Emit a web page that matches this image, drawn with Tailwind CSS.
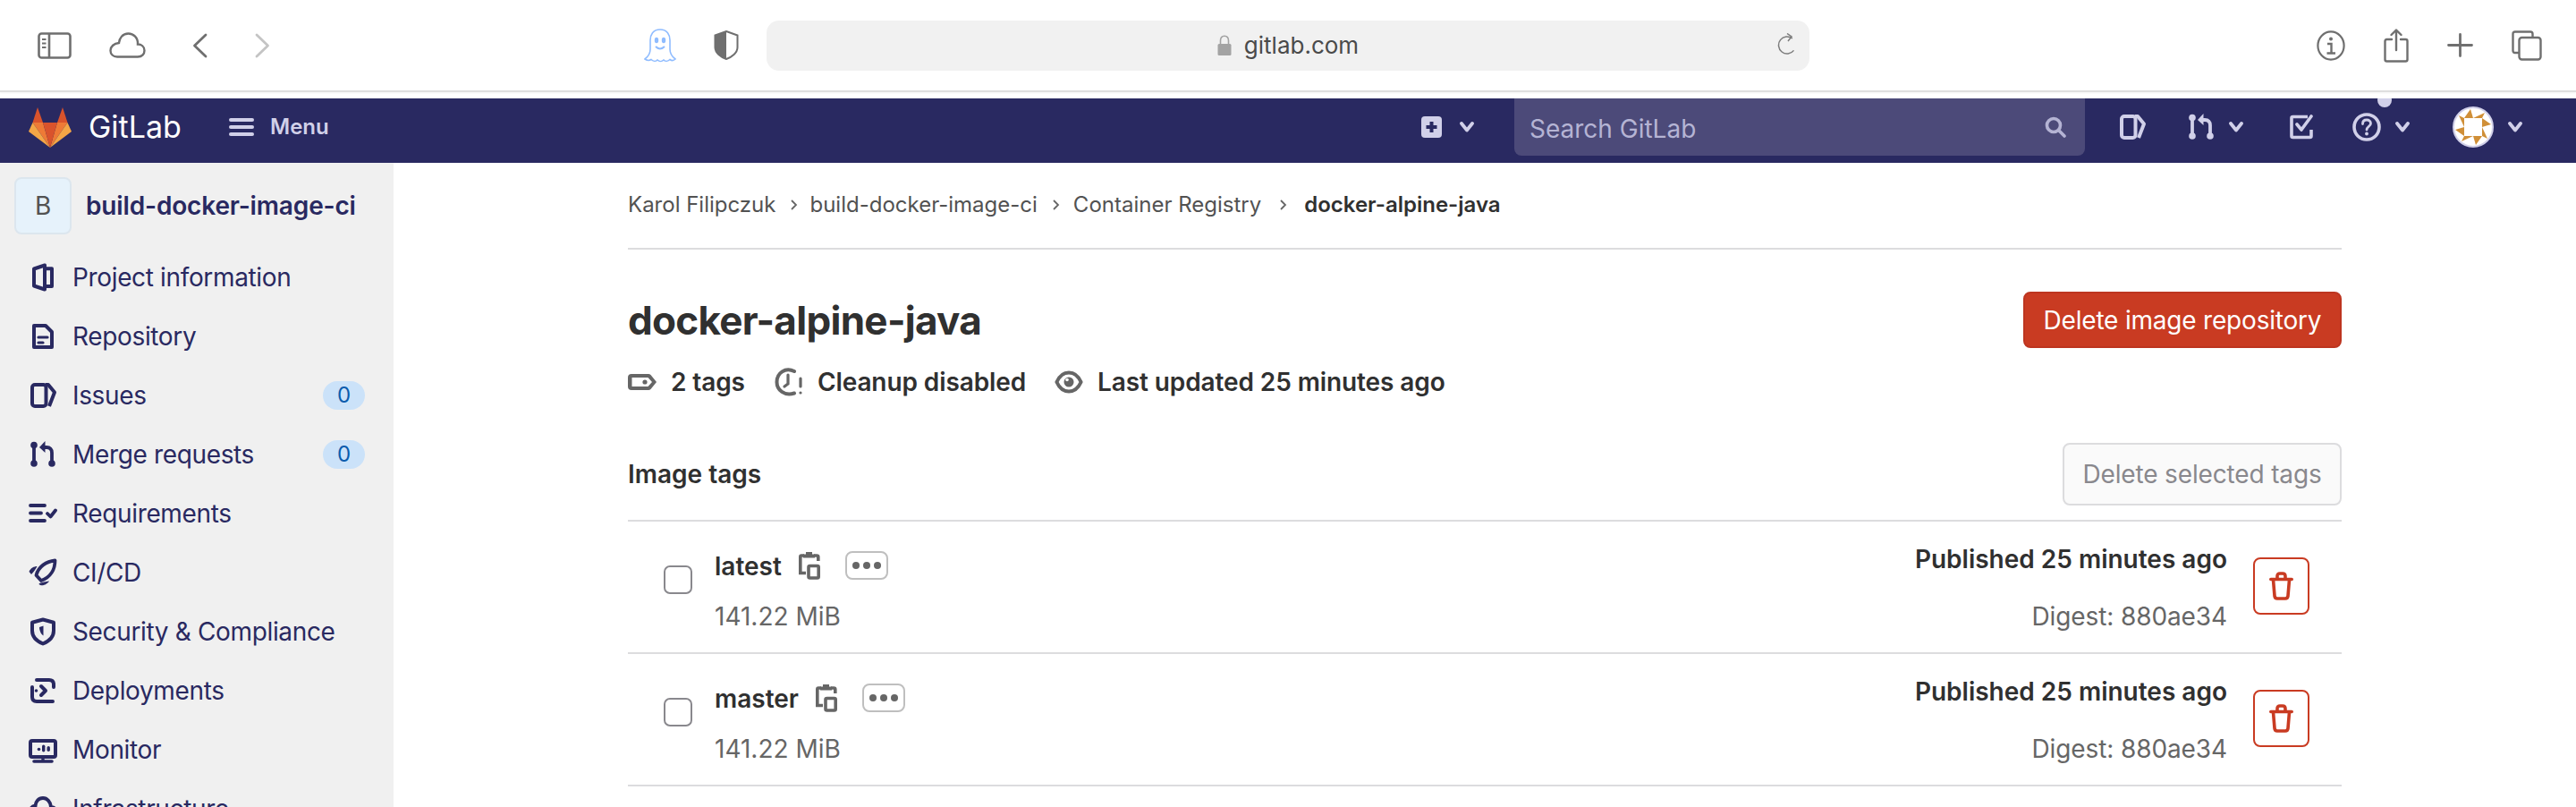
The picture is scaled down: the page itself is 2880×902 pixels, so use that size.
<!DOCTYPE html>
<html lang="en">
  <head>
    <meta charset="UTF-8" />
    <title>docker-alpine-java · GitLab</title>
    <script src="https://cdn.jsdelivr.net/npm/@tailwindcss/browser@4"></script>
  </head>
  <body class="w-[2880px] h-[902px] overflow-hidden bg-white font-['Inter',sans-serif] text-[28px] text-[#303030]">
    <svg class="hidden">
      <symbol id="chev" viewBox="0 0 16 12"><path d="M2 2 L8 9.5 L14 2" fill="none" stroke="currentColor" stroke-width="3.8" stroke-linecap="round" stroke-linejoin="round" /></symbol>
      <symbol id="issues" viewBox="0 0 32 32"><g fill="none" stroke="currentColor" stroke-width="4" stroke-linejoin="round"><rect x="4" y="4" width="15.5" height="24" rx="3" /><path d="M19 4 H22 L29 12.5 L23 28" /></g></symbol>
      <symbol id="mr" viewBox="0 0 32 32"><g fill="none" stroke="currentColor" stroke-width="3.8"><path d="M6 6 V26" /><path d="M26 26 V14 Q26 8 20 8 H16" /></g><g fill="currentColor"><circle cx="6" cy="5.5" r="3.8" /><circle cx="6" cy="26" r="3.8" /><circle cx="26" cy="26" r="3.8" /><path d="M18.5 1 L12 8 L18.5 14Z" /></g></symbol>
      <symbol id="clip" viewBox="0 0 24 32"><g fill="none" stroke="currentColor" stroke-width="3.6"><path d="M6 5 H3 Q1.8 5 1.8 6.5 V24.5 H8" /><path d="M17 5 H20 Q21.8 5 21.8 6.5 V11" /><path d="M6 6.5 V4.5 H9 V2 H14 V4.5 H17 V6.5Z" fill="currentColor" stroke-width="2" /><rect x="11" y="16.5" width="11.2" height="13.5" rx="1.5" /></g></symbol>
      <symbol id="trash" viewBox="0 0 27 32"><g fill="none" stroke="currentColor" stroke-width="3.6" stroke-linecap="round" stroke-linejoin="round"><path d="M1.8 8.5 H25.2" /><path d="M9 8 V5 Q9 2 12 2 H15 Q18 2 18 5 V8" /><path d="M4.5 9 L6 27 Q6.3 30 9 30 H18 Q20.7 30 21 27 L22.5 9" /></g></symbol>
    </svg>

    <!-- Browser toolbar -->
    <div class="flex items-center h-[103px] border-b-2 border-[#dedede] pl-[42px] text-[#6f6f6f] shadow-[0_1px_2px_#0000000d]">
      <svg class="w-[38px] h-[30px] shrink-0" viewBox="0 0 38 30" fill="none" stroke="currentColor" stroke-width="2.6"><rect x="1.5" y="1.5" width="35" height="27" rx="3" /><path d="M13 1.5 V28.5" /><path d="M5 8 H9.5 M5 12.5 H9.5 M5 17 H9.5" stroke-width="2" /></svg>
      <svg class="ml-[42px] w-[41px] h-[29px] shrink-0" viewBox="0 0 41 29" fill="none" stroke="currentColor" stroke-width="2.4"><path d="M9 27.5 H32 C37 27.5 39.5 24 39.5 20.5 C39.5 16 36 13.5 32 13.5 C32.5 6 27 1.5 21.5 1.5 C15 1.5 11.5 6.5 11 12 C5.5 12.5 1.5 16 1.5 20.5 C1.5 24.5 4.5 27.5 9 27.5Z" /></svg>
      <svg class="ml-[52px] w-[17px] h-[28px] shrink-0" viewBox="0 0 17 28" fill="none" stroke="currentColor" stroke-width="2.8" stroke-linecap="round" stroke-linejoin="round"><path d="M15 2 L2.5 14 L15 26" /></svg>
      <svg class="ml-[53px] w-[17px] h-[28px] shrink-0 text-[#c4c4c4]" viewBox="0 0 17 28" fill="none" stroke="currentColor" stroke-width="2.8" stroke-linecap="round" stroke-linejoin="round"><path d="M2 2 L14.5 14 L2 26" /></svg>
      <svg class="ml-[418px] w-[36px] h-[38px] shrink-0" viewBox="0 0 36 38" fill="none" stroke="#8fbcff" stroke-width="1.6"><path d="M18 1 C10 1 7 7 7 13 V23 C7 28 5 31 1 34 C4 36 6 36 8 34.5 C10 36.5 13 37 15 35 C17 37 20 37 22 35 C24 37 27 36.5 29 34.5 C31 36 33 36 35 34 C31 31 29 28 29 23 V13 C29 7 26 1 18 1Z" /><ellipse cx="14" cy="13" rx="2.2" ry="3.2" fill="#8fbcff" stroke="none" /><ellipse cx="22" cy="13" rx="2.2" ry="3.2" fill="#8fbcff" stroke="none" /><path d="M13 20 Q18 25 23 20" stroke-width="2" /></svg>
      <svg class="ml-[42px] w-[28px] h-[33px] shrink-0" viewBox="0 0 28 33"><path d="M14 1 L26.5 5.5 V19 C26.5 25 20 30 14 32 C8 30 1.5 25 1.5 19 V5.5Z" fill="#fff" stroke="currentColor" stroke-width="2" /><path d="M14 1 L1.5 5.5 V19 C1.5 25 8 30 14 32Z" fill="currentColor" /></svg>
      <div class="relative ml-[31px] w-[1166px] h-[56px] shrink-0 flex items-center justify-center rounded-[14px] bg-[#f1f1f1]">
        <svg class="w-[16px] h-[23px] mr-[14px]" viewBox="0 0 16 23"><path d="M3.5 11 V6.5 C3.5 3 5.5 1.2 8 1.2 C10.5 1.2 12.5 3 12.5 6.5 V11" fill="none" stroke="#a3a3a3" stroke-width="1.6" /><rect x="0.5" y="10" width="15" height="13" rx="1.5" fill="#a3a3a3" /></svg>
        <span class="text-[26px] text-[#4a4a4a]">gitlab.com</span>
        <svg class="absolute right-[14px] top-[14px] w-[22px] h-[24px]" viewBox="0 0 22 24" fill="none" stroke="#7c7c7c" stroke-width="1.5"><path d="M11 4 A9.5 9.5 0 1 0 20.5 13.5" transform="rotate(38 11 13.5)" /><path d="M11 0.5 L16 4 L12 9" /></svg>
      </div>
      <svg class="ml-[567px] w-[32px] h-[34px] shrink-0" viewBox="0 0 32 34" fill="none" stroke="currentColor" stroke-width="2.2"><ellipse cx="16" cy="17" rx="14.6" ry="15.6" /><path d="M12 15 H16.5 V25 M11.5 25.5 H21" stroke-width="2.4" /><circle cx="16" cy="9.5" r="2" fill="currentColor" stroke="none" /></svg>
      <svg class="ml-[43px] w-[28px] h-[38px] shrink-0" viewBox="0 0 28 38" fill="none" stroke="currentColor" stroke-width="2.4" stroke-linecap="round" stroke-linejoin="round"><path d="M9 12 H3.5 Q1.5 12 1.5 14 V34.5 Q1.5 36.5 3.5 36.5 H24.5 Q26.5 36.5 26.5 34.5 V14 Q26.5 12 24.5 12 H19" /><path d="M14 24 V2 M8.5 7 L14 1.5 L19.5 7" /></svg>
      <svg class="ml-[43px] w-[29px] h-[27px] shrink-0" viewBox="0 0 29 27" fill="none" stroke="currentColor" stroke-width="2.8" stroke-linecap="round"><path d="M14.5 1.5 V25.5 M1.5 13.5 H27.5" /></svg>
      <svg class="ml-[43px] w-[34px] h-[34px] shrink-0" viewBox="0 0 34 34" fill="none" stroke="currentColor" stroke-width="2.4"><path d="M8 25 H4 Q1.5 25 1.5 22.5 V4 Q1.5 1.5 4 1.5 H21 Q23.5 1.5 23.5 4 V8" /><rect x="8.5" y="8" width="24" height="24.5" rx="3" /></svg>
    </div>

    <!-- GitLab navbar -->
    <nav class="mt-[7px] flex items-center h-[72px] pb-2 pl-[32px] overflow-hidden bg-[#292961] text-[#d1d0e9]">
      <svg class="w-[48px] h-[45px] shrink-0" viewBox="0 0 48 45">
        <polygon points="10,0 4.5,17 16,17" fill="#d9532c" />
        <polygon points="38,0 43.5,17 32,17" fill="#d9532c" />
        <polygon points="4.5,17 16,17 24,45" fill="#ee7a36" />
        <polygon points="43.5,17 32,17 24,45" fill="#ee7a36" />
        <polygon points="4.5,17 0,27 24,45" fill="#f4a646" />
        <polygon points="43.5,17 48,27 24,45" fill="#f4a646" />
        <polygon points="16,17 32,17 24,45" fill="#d9532c" />
      </svg>
      <div class="ml-[19px] w-[157px] shrink-0 text-[34px] leading-none text-white">GitLab</div>
      <svg class="w-[28px] h-[20px] shrink-0" viewBox="0 0 28 20" fill="currentColor"><rect width="28" height="4" rx="2" /><rect y="8" width="28" height="4" rx="2" /><rect y="16" width="28" height="4" rx="2" /></svg>
      <span class="ml-[18px] text-[24px] font-semibold">Menu</span>

      <div class="ml-auto pr-[60px] flex items-center h-full shrink-0">
        <svg class="w-[23px] h-[24px] shrink-0" viewBox="0 0 23 24"><rect width="23" height="24" rx="4" fill="currentColor" /><path d="M11.5 6 V18 M5.5 12 H17.5" stroke="#292961" stroke-width="4" /></svg>
        <svg class="ml-[20px] w-[16px] h-[12px] shrink-0"><use href="#chev" /></svg>
        <div class="ml-[45px] w-[638px] h-full shrink-0 flex items-center justify-between pl-[17px] pr-[21px] rounded-b-lg bg-[#4c4a79]">
          <span class="pt-[4px] text-[#b5b4d4]">Search GitLab</span>
          <svg class="w-[24px] h-[24px]" viewBox="0 0 24 24" fill="none" stroke="#b5b4d4" stroke-width="3.6" stroke-linecap="round"><circle cx="10" cy="10" r="7.5" /><path d="M16 16 L22 22" /></svg>
        </div>
        <svg class="ml-[37px] w-[32px] h-[32px] shrink-0"><use href="#issues" /></svg>
        <svg class="ml-[45px] w-[32px] h-[32px] shrink-0"><use href="#mr" /></svg>
        <svg class="ml-[15px] w-[16px] h-[12px] shrink-0"><use href="#chev" /></svg>
        <svg class="ml-[52px] w-[26px] h-[28px] shrink-0" viewBox="0 0 26 28" fill="none" stroke="currentColor" stroke-width="3.6" stroke-linejoin="round"><path d="M20 2.5 H3.5 Q2 2.5 2 4 V24 Q2 25.5 3.5 25.5 H22.5 Q24 25.5 24 24 V17" /><path d="M8 11 L13 17 L24 2" stroke-linecap="round" /></svg>
        <div class="relative ml-[44px] w-[32px] h-[32px] shrink-0">
          <svg class="w-[32px] h-[32px]" viewBox="0 0 32 32" fill="none" stroke="currentColor" stroke-width="3.6"><circle cx="16" cy="16" r="14" /><path d="M11.5 12.5 C11.5 9.5 13.5 8 16 8 C18.5 8 20.5 9.5 20.5 12 C20.5 15 16 15.5 16 19" stroke-width="2.8" stroke-linecap="round" /><circle cx="16" cy="23.5" r="1.9" fill="currentColor" stroke="none" /></svg>
          <span class="absolute top-[-22px] left-[28px] w-[16px] h-[16px] rounded-full bg-[#d1d0e9]"></span>
        </div>
        <svg class="ml-[16px] w-[16px] h-[12px] shrink-0"><use href="#chev" /></svg>
        <svg class="ml-[48px] w-[46px] h-[46px] shrink-0" viewBox="0 0 46 46">
          <circle cx="23" cy="23" r="22" fill="#fff" stroke="#d1d0e9" stroke-width="2" />
          <g fill="#d08f37">
            <g><polygon points="13,13 23,13 20,3" /><polygon points="23,13 33,13 36,7" /></g>
            <g transform="rotate(90 23 23)"><polygon points="13,13 23,13 20,3" /><polygon points="23,13 33,13 36,7" /></g>
            <g transform="rotate(180 23 23)"><polygon points="13,13 23,13 20,3" /><polygon points="23,13 33,13 36,7" /></g>
            <g transform="rotate(270 23 23)"><polygon points="13,13 23,13 20,3" /><polygon points="23,13 33,13 36,7" /></g>
          </g>
        </svg>
        <svg class="ml-[16px] w-[16px] h-[12px] shrink-0"><use href="#chev" /></svg>
      </div>
    </nav>

    <div class="flex h-[720px] overflow-hidden">
      <!-- Sidebar -->
      <aside class="w-[440px] shrink-0 bg-[#f0f0f0] pt-4 text-[#292961] tracking-[-0.35px]">
        <div class="flex items-center pl-4 mb-[15px]">
          <div class="w-[64px] h-[64px] rounded-lg border-2 border-[#dce6ee] bg-[#e6f2fb] flex items-center justify-center text-[#525252]">B</div>
          <span class="ml-[16px] font-semibold tracking-[-0.15px]">build-docker-image-ci</span>
        </div>
        <a class="flex items-center h-[66px] pl-[32px]">
          <svg class="w-[32px] h-[32px] shrink-0" viewBox="0 0 32 32" fill="none" stroke="currentColor" stroke-width="4" stroke-linejoin="round"><path d="M6 6.5 L18 2.5 V29.5 L6 25.5Z" /><path d="M18 6.2 H26 V26 H18" /></svg>
          <span class="ml-[17px]">Project information</span>
        </a>
        <a class="flex items-center h-[66px] pl-[32px]">
          <svg class="w-[32px] h-[32px] shrink-0" viewBox="0 0 32 32" fill="none" stroke="currentColor" stroke-width="4" stroke-linejoin="round"><path d="M6 4 H19 L26 11 V28 H6Z" /><path d="M11 17 H21 M11 23 H16" stroke-width="3.2" stroke-linecap="round" /></svg>
          <span class="ml-[17px]">Repository</span>
        </a>
        <a class="flex items-center h-[66px] pl-[32px] pr-[32px]">
          <svg class="w-[32px] h-[32px] shrink-0"><use href="#issues" /></svg>
          <span class="ml-[17px]">Issues</span>
          <span class="ml-auto w-[47px] h-[32px] rounded-full bg-[#cbe2f9] flex items-center justify-center text-[24px] text-[#0b5cad]">0</span>
        </a>
        <a class="flex items-center h-[66px] pl-[32px] pr-[32px]">
          <svg class="w-[32px] h-[32px] shrink-0"><use href="#mr" /></svg>
          <span class="ml-[17px]">Merge requests</span>
          <span class="ml-auto w-[47px] h-[32px] rounded-full bg-[#cbe2f9] flex items-center justify-center text-[24px] text-[#0b5cad]">0</span>
        </a>
        <a class="flex items-center h-[66px] pl-[32px]">
          <svg class="w-[32px] h-[32px] shrink-0" viewBox="0 0 32 32" fill="none" stroke="currentColor" stroke-width="3.8" stroke-linecap="round" stroke-linejoin="round"><path d="M2 7 H18 M2 15.5 H14 M2 24 H18" /><path d="M21 16 L24.5 19.5 L30 12.5" /></svg>
          <span class="ml-[17px]">Requirements</span>
        </a>
        <a class="flex items-center h-[66px] pl-[32px]">
          <svg class="w-[32px] h-[32px] shrink-0" viewBox="0 0 32 32"><path d="M29.5 2.5 C29.5 12 25 21 14 25 L8.5 19 C11 9 20 3.5 29.5 2.5Z" fill="none" stroke="currentColor" stroke-width="3.8" stroke-linejoin="round" /><path d="M0.5 15 C2 11 6 9 9.5 9 C8 12 6 15 3 18Z M11.5 29 C15 32 21 29 23 25.5 C19 26 15 27 12 28Z" fill="currentColor" /></svg>
          <span class="ml-[17px]">CI/CD</span>
        </a>
        <a class="flex items-center h-[66px] pl-[32px]">
          <svg class="w-[32px] h-[32px] shrink-0" viewBox="0 0 32 32"><path d="M16 2.5 L28 5.8 V15 C28 22 22 27 16 29.5 C10 27 4 22 4 15 V5.8Z" fill="none" stroke="currentColor" stroke-width="4" stroke-linejoin="round" /><path d="M16.5 9.5 L12 11 C12 15 14 19 16.5 20.5Z" fill="currentColor" /></svg>
          <span class="ml-[17px]">Security &amp; Compliance</span>
        </a>
        <a class="flex items-center h-[66px] pl-[32px]">
          <svg class="w-[32px] h-[32px] shrink-0" viewBox="0 0 32 32" fill="none" stroke="currentColor" stroke-width="4" stroke-linecap="round" stroke-linejoin="round"><path d="M9 4 H23 Q28 4 28 9 V12" /><path d="M4 12 V23 Q4 28 9 28 H27" /><path d="M14 11 L19 16 L14 21" /><circle cx="8.5" cy="16" r="1.8" fill="currentColor" stroke="none" /></svg>
          <span class="ml-[17px]">Deployments</span>
        </a>
        <a class="flex items-center h-[66px] pl-[32px]">
          <svg class="w-[32px] h-[32px] shrink-0" viewBox="0 0 32 32"><rect x="2" y="6" width="28" height="18" rx="2" fill="none" stroke="currentColor" stroke-width="4" /><path d="M6 29 H26" stroke="currentColor" stroke-width="3.6" stroke-linecap="round" /><path d="M16 24 V28" stroke="currentColor" stroke-width="3.4" /><g fill="currentColor"><circle cx="11.5" cy="15.5" r="1.8" /><rect x="15" y="10.5" width="3.4" height="8" rx="1.7" /><rect x="20.5" y="12" width="3.4" height="6" rx="1.7" /></g></svg>
          <span class="ml-[17px]">Monitor</span>
        </a>
        <a class="flex items-center h-[66px] pl-[32px]">
          <svg class="w-[32px] h-[32px] shrink-0" viewBox="0 0 32 32" fill="none" stroke="currentColor" stroke-width="4"><path d="M8 26 H25 C29 26 31 23 31 20 C31 16.5 28.5 14 25 14 C24.5 8 20.5 4 16 4 C11 4 8 8 7.5 12.5 C3.5 13.5 1.5 16.5 1.5 20 C1.5 23.5 4 26 8 26Z" /></svg>
          <span class="ml-[17px]">Infrastructure</span>
        </a>
      </aside>

      <!-- Content -->
      <main class="flex-1 px-[262px]">
        <div class="h-[97px] flex items-center pb-[2px] border-b-2 border-[#dcdcde] text-[24px] text-[#525252]">
          <span>Karol Filipczuk</span>
          <svg class="ml-[14px] mr-[12px] w-[12px] h-[14px]" viewBox="0 0 12 14" fill="none" stroke="#666" stroke-width="1.8"><path d="M4 2 L9 7 L4 12" /></svg>
          <span>build-docker-image-ci</span>
          <svg class="mx-[14px] w-[12px] h-[14px]" viewBox="0 0 12 14" fill="none" stroke="#666" stroke-width="1.8"><path d="M4 2 L9 7 L4 12" /></svg>
          <span>Container Registry</span>
          <svg class="mx-[18px] w-[12px] h-[14px]" viewBox="0 0 12 14" fill="none" stroke="#666" stroke-width="1.8"><path d="M4 2 L9 7 L4 12" /></svg>
          <span class="font-semibold text-[#303030]">docker-alpine-java</span>
        </div>

        <div class="mt-[47px] flex items-center justify-between h-[63px]">
          <h1 class="text-[44px] font-bold tracking-[-0.7px] leading-none">docker-alpine-java</h1>
          <button class="w-[356px] h-[63px] rounded-lg border-2 border-[#bd3520] bg-[#c93b22] text-white tracking-[-0.2px]">Delete image repository</button>
        </div>

        <div class="mt-[22px] h-[32px] flex items-center font-semibold tracking-[-0.1px]">
          <svg class="w-[32px] h-[18px] shrink-0 text-[#666]" viewBox="0 0 32 18"><path fill-rule="evenodd" d="M4 0 H23 Q24.5 0 25.5 1 L32 9 L25.5 17 Q24.5 18 23 18 H4 Q0 18 0 14 V4 Q0 0 4 0Z M4.5 4 V14 H22.5 L27 9 L22.5 4Z" fill="currentColor" /><circle cx="19" cy="9" r="2.6" fill="currentColor" /></svg>
          <span class="ml-[16px]">2 tags</span>
          <svg class="ml-[33px] w-[32px] h-[32px] shrink-0 text-[#666]" viewBox="0 0 32 32" fill="none" stroke="currentColor" stroke-width="4" stroke-linecap="round"><path d="M22 4 C12 -1 2.5 6 2.5 16 C2.5 25 11 32 22 28.5" /><path d="M15 8 V18 L11 21" stroke-width="3.2" /><path d="M29 12 V21" stroke-width="3.2" /><circle cx="29" cy="28" r="1.6" fill="currentColor" stroke="none" /></svg>
          <span class="ml-[16px]">Cleanup disabled</span>
          <svg class="ml-[32px] w-[32px] h-[32px] shrink-0 text-[#666]" viewBox="0 0 32 32" fill="none" stroke="currentColor" stroke-width="4" stroke-linejoin="round"><path d="M2.4 16 C6 8 11 5.5 16 5.5 C21 5.5 26 8 29.6 16 C26 24 21 26.5 16 26.5 C11 26.5 6 24 2.4 16Z" /><circle cx="16" cy="16" r="5.5" fill="currentColor" stroke="none" /><circle cx="14" cy="13.5" r="1.8" fill="#fff" stroke="none" /></svg>
          <span class="ml-[16px]">Last updated 25 minutes ago</span>
        </div>

        <div class="mt-[52px] flex items-center justify-between h-[70px]">
          <span class="font-semibold">Image tags</span>
          <button class="w-[312px] h-[70px] rounded-lg border-2 border-[#dcdcde] bg-[#fafafa] text-[#89888d] tracking-[-0.15px]">Delete selected tags</button>
        </div>

        <div class="mt-[16px] border-t-2 border-[#dcdcde]">
          <div class="h-[148px] border-b-2 border-[#dcdcde] flex items-start pt-[33px] pl-[40px] pr-[36px]">
            <span class="mt-[16px] w-[32px] h-[32px] shrink-0 rounded-[7px] border-2 border-[#89888d]"></span>
            <div class="ml-[25px]">
              <div class="flex items-center h-[32px]">
                <span class="pt-[2px] font-semibold">latest</span>
                <svg class="ml-[19px] w-[24px] h-[32px] shrink-0 text-[#666]"><use href="#clip" /></svg>
                <span class="ml-[28px] w-[48px] h-[32px] shrink-0 rounded-lg border-2 border-[#bfbfbf] flex items-center justify-center gap-[4px]">
                  <i class="w-[8px] h-[8px] rounded-full bg-[#666]"></i><i class="w-[8px] h-[8px] rounded-full bg-[#666]"></i><i class="w-[8px] h-[8px] rounded-full bg-[#666]"></i>
                </span>
              </div>
              <div class="mt-[25px] h-[32px] leading-[32px] text-[#666]">141.22 MiB</div>
            </div>
            <div class="ml-auto -mt-[7px] text-right">
              <div class="font-semibold h-[32px] leading-[32px]">Published 25 minutes ago</div>
              <div class="mt-[32px] h-[32px] leading-[32px] text-[#666] tracking-[-0.1px]">Digest: 880ae34</div>
            </div>
            <button class="ml-[29px] mt-[8px] -translate-y-[1px] w-[63px] h-[64px] shrink-0 rounded-lg border-2 border-[#c93b22] flex items-center justify-center text-[#c93b22]">
              <svg class="w-[27px] h-[32px]"><use href="#trash" /></svg>
            </button>
          </div>
          <div class="h-[148px] border-b-2 border-[#dcdcde] flex items-start pt-[33px] pl-[40px] pr-[36px]">
            <span class="mt-[16px] w-[32px] h-[32px] shrink-0 rounded-[7px] border-2 border-[#89888d]"></span>
            <div class="ml-[25px]">
              <div class="flex items-center h-[32px]">
                <span class="pt-[2px] font-semibold">master</span>
                <svg class="ml-[19px] w-[24px] h-[32px] shrink-0 text-[#666]"><use href="#clip" /></svg>
                <span class="ml-[28px] w-[48px] h-[32px] shrink-0 rounded-lg border-2 border-[#bfbfbf] flex items-center justify-center gap-[4px]">
                  <i class="w-[8px] h-[8px] rounded-full bg-[#666]"></i><i class="w-[8px] h-[8px] rounded-full bg-[#666]"></i><i class="w-[8px] h-[8px] rounded-full bg-[#666]"></i>
                </span>
              </div>
              <div class="mt-[25px] h-[32px] leading-[32px] text-[#666]">141.22 MiB</div>
            </div>
            <div class="ml-auto -mt-[7px] text-right">
              <div class="font-semibold h-[32px] leading-[32px]">Published 25 minutes ago</div>
              <div class="mt-[32px] h-[32px] leading-[32px] text-[#666] tracking-[-0.1px]">Digest: 880ae34</div>
            </div>
            <button class="ml-[29px] mt-[8px] -translate-y-[1px] w-[63px] h-[64px] shrink-0 rounded-lg border-2 border-[#c93b22] flex items-center justify-center text-[#c93b22]">
              <svg class="w-[27px] h-[32px]"><use href="#trash" /></svg>
            </button>
          </div>
        </div>
      </main>
    </div>
  </body>
</html>
